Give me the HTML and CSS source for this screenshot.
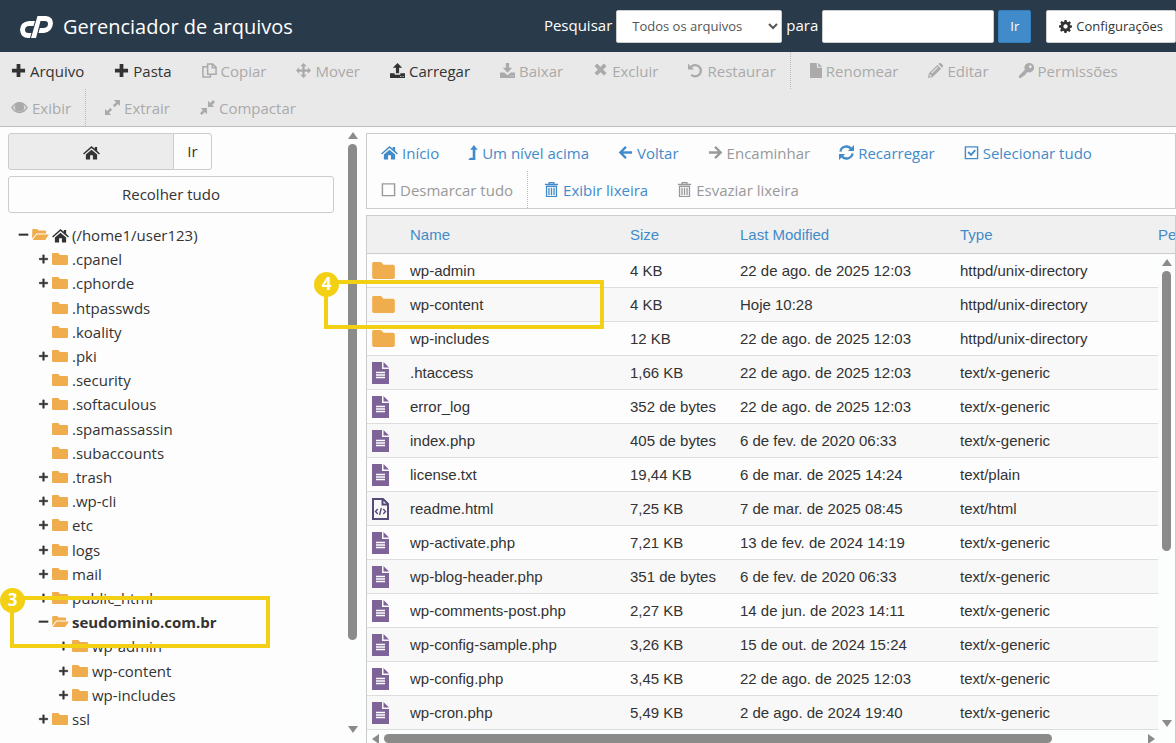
FILE: index.html
```html
<!DOCTYPE html>
<html lang="pt-BR">
<head>
  <meta charset="UTF-8">
  <title>Gerenciador de arquivos</title>
  <link rel="stylesheet" href="styles.css">
</head>

<body>
  <svg class="sprite" aria-hidden="true">
    <symbol id="plus" viewBox="0 0 16 16"><path d="M6 1h4v5h5v4h-5v5H6v-5H1V6h5z"/></symbol>
    <symbol id="minus" viewBox="0 0 16 16"><path d="M1 6h14v3H1z"/></symbol>
    <symbol id="plus-thin" viewBox="0 0 16 16"><path d="M7 2h2v5h5v2H9v5H7V9H2V7h5z" stroke="currentColor"/></symbol>
    <symbol id="copy" viewBox="0 0 16 16"><path d="M6 1h5.500L15 4.500V12H6zM11 1v4h4M6 4H1v11h8v-3" fill="none" stroke="currentColor" stroke-width="1.600"/></symbol>
    <symbol id="move" viewBox="0 0 16 16"><path d="M8 0l3.400 3.400H9.200v3.400h3.400V4.600L16 8l-3.400 3.400V9.200H9.200v3.400h2.200L8 16l-3.400-3.400h2.200V9.200H3.400v2.200L0 8l3.400-3.400v2.200h3.400V3.400H4.600z"/></symbol>
    <symbol id="upload" viewBox="0 0 16 16"><path d="M8 0l5 5h-3.300v6H6.300V5H3zM0 11h5v1.500h6V11h5v5H0zm11 2.800v1.200h1v-1.200zm2.500 0v1.200h1v-1.200z" fill-rule="evenodd"/></symbol>
    <symbol id="download" viewBox="0 0 16 16"><path d="M6.300 0h3.400v5H13l-5 5.500L3 5h3.300zM0 10h4.500L8 13l3.500-3H16v6H0zm11 3.300v1.200h1v-1.200zm2.500 0v1.200h1v-1.200z" fill-rule="evenodd"/></symbol>
    <symbol id="times" viewBox="0 0 16 16"><path d="M3 2l10 10M13 2L3 12" fill="none" stroke="currentColor" stroke-width="4"/></symbol>
    <symbol id="undo" viewBox="0 0 16 16"><path d="M3 4.500a6 6 0 1 1 .500 8" fill="none" stroke="currentColor" stroke-width="2.500"/><path d="M0 .500L6.500 7H0z"/></symbol>
    <symbol id="file" viewBox="0 0 13 16"><path d="M0 0h7.500v5H13v11H0zM9 0l4 4H9z"/></symbol>
    <symbol id="pencil" viewBox="0 0 16 16"><path d="M0 16l1-5 9-9 4 4-9 9zM11 1l1.200-1q.8-.5 1.500 0L16 2.300q.5.700 0 1.500l-1 1.200zM2 11.800l-.5 2.700 2.700-.5zM10 4l-6.500 6.500.8.800L10.800 4.800z" fill-rule="evenodd"/></symbol>
    <symbol id="key" viewBox="0 0 16 16"><path d="M11 0a5 5 0 1 1-1.800 9.600L7 11.500v1.500H5v1.500H3.500L2 16H0v-2.500l6.300-6.300A5 5 0 0 1 11 0zm1 2.500a1.500 1.500 0 1 0 .1 0z" fill-rule="evenodd"/></symbol>
    <symbol id="eye" viewBox="0 0 18 16"><path d="M0 8q3.500-6 9-6t9 6q-3.500 6-9 6T0 8zm2 0q2.600 4.400 7 4.400T16 8q-1-1.700-2.700-2.900a5 5 0 1 1-8.600 0Q3 6.300 2 8z" fill-rule="evenodd"/><path d="M9 4a4 4 0 1 1-.1 0zm0 1.300Q6.300 5.400 6.200 8h1Q7.300 6.400 9 6.300z" fill-rule="evenodd"/></symbol>
    <symbol id="expand" viewBox="0 0 16 16"><path d="M9.500 0H16v6.500l-2.300-2.300-3.400 3.400-1.900-1.900 3.400-3.400zM0 9.500l2.300 2.300 3.400-3.400 1.900 1.900-3.400 3.400L6.500 16H0z"/></symbol>
    <symbol id="compress" viewBox="0 0 16 16"><path d="M8.500.8l2.300 2.300L14 0l2 2-3.100 3.200 2.300 2.300H8.500zM.8 8.500h6.700v6.700l-2.300-2.300L2 16l-2-2 3.100-3.200z"/></symbol>
    <symbol id="gear" viewBox="0 0 16 16"><path d="M6.700 0h2.600l.5 2.200 1.200.5 2-1.200L14.700 3.300 13.400 5.200l.5 1.200 2.100.4v2.500l-2.200.5-.5 1.200 1.200 2-1.700 1.700-2-1.200-1.200.5-.4 2H6.700l-.5-2.200L5 13.300l-2 1.200L1.300 12.700l1.200-2L2 9.600 0 9.200V6.700l2.200-.5.500-1.200-1.200-2L3.300 1.300l1.900 1.200 1.200-.5zM8 5.300a2.700 2.700 0 1 0 .1 0z" fill-rule="evenodd"/></symbol>
    <symbol id="home" viewBox="0 0 18 16"><path d="M9 1L12.500 4V2H15v4.200L18 9l-1 1.200L9 3.300 1 10.200 0 9z"/><path d="M9 5l6 5v5.500h-4.500V11h-3v4.500H3V10z"/></symbol>
    <symbol id="level-up" viewBox="0 0 10 16"><path d="M6 0l4 5H7.500v11H0l1.800-2.500H4.700V5H2z"/></symbol>
    <symbol id="arrow-left" viewBox="0 0 16 16"><path d="M15 8H3M8.500 2l-6 6 6 6" fill="none" stroke="currentColor" stroke-width="2.500"/></symbol>
    <symbol id="arrow-right" viewBox="0 0 16 16"><path d="M1 8h12M7.500 2l6 6-6 6" fill="none" stroke="currentColor" stroke-width="2.500"/></symbol>
    <symbol id="refresh" viewBox="0 0 16 16"><path d="M1.500 7A6.300 6.300 0 0 1 13 4.500M14.500 9A6.300 6.300 0 0 1 3 11.500" fill="none" stroke="currentColor" stroke-width="2.400"/><path d="M16 0v6.500H9.500zM0 16V9.500h6.500z"/></symbol>
    <symbol id="check-square" viewBox="0 0 16 16"><path d="M1.500 2h13v12.500h-13z" fill="none" stroke="currentColor" stroke-width="1.500"/><path d="M4.500 7.500l3 3L12 5.500" fill="none" stroke="currentColor" stroke-width="2"/></symbol>
    <symbol id="square" viewBox="0 0 16 16"><path d="M1.500 2h13v12.500h-13z" fill="none" stroke="currentColor" stroke-width="1.500"/></symbol>
    <symbol id="trash" viewBox="0 0 16 16"><path d="M1 2.500h14M5.500 2V.700h5V2M2.700 4.500h10.600v11H2.700zM5.300 6v8M8 6v8M10.700 6v8" fill="none" stroke="currentColor" stroke-width="1.400"/></symbol>
    <symbol id="folder" viewBox="0 0 24 18"><path d="M1.500 0h8L12 3h10q2 0 2 2v11q0 2-2 2H2q-2 0-2-2V1.500Q0 0 1.500 0z"/></symbol>
    <symbol id="folder-open" viewBox="0 0 18 13"><path d="M0 1q0-1 1-1h4.500L7 1.500h7q1 0 1 1V5H4.500L0 10.500z"/><path d="M4.800 6H18l-3.500 5.500q-.3.500-1 .5H.5z"/></symbol>
    <symbol id="text-file" viewBox="0 0 17 22"><path d="M0 0h10v7h7v15H0zM11.500 0L17 5.500h-5.500z"/><path d="M4 10.500h9M4 13h9M4 15.500h9" stroke="#fff" stroke-width="1.300"/></symbol>
    <symbol id="code-file" viewBox="0 0 17 22"><path d="M1 1h10l5 5v15H1zM10.500 1v5.500H16" fill="none" stroke="currentColor" stroke-width="2"/><path d="M5.800 11L3.500 13.500 5.800 16M11.200 11l2.300 2.500-2.300 2.500M9.300 10l-1.700 7" fill="none" stroke="currentColor" stroke-width="1.400"/></symbol>
  </svg>

  <header class="top-bar">
    <h1 class="brand">
      <svg class="logo" viewBox="0 0 33 22" aria-hidden="true"><path d="M15 5H9Q0 6 0 14q1 8 8 8h2l1.400-5H8.500Q5 17 5 13.500 5.500 10 9 10h4.500zM17.500 0H26q7 .5 7 7.500-1 8.500-9 9.500h-5.500l1.400-5H24q4-.5 4-4Q28 5 25 5h-4.500L16 22h-5z" fill-rule="evenodd"/></svg>
      Gerenciador de arquivos
    </h1>
    <form class="search">
      <label for="scope">Pesquisar</label>
      <select id="scope"><option>Todos os arquivos</option></select>
      <label for="term">para</label>
      <input id="term" type="text">
      <button class="go" type="button">Ir</button>
      <button class="settings" type="button"><svg class="icon"><use href="#gear"/></svg>Configurações</button>
    </form>
  </header>

  <nav class="toolbar">
    <button><svg class="icon"><use href="#plus"/></svg>Arquivo</button>
    <button><svg class="icon"><use href="#plus"/></svg>Pasta</button>
    <button disabled><svg class="icon"><use href="#copy"/></svg>Copiar</button>
    <button disabled><svg class="icon"><use href="#move"/></svg>Mover</button>
    <button><svg class="icon"><use href="#upload"/></svg>Carregar</button>
    <button disabled><svg class="icon"><use href="#download"/></svg>Baixar</button>
    <button disabled><svg class="icon"><use href="#times"/></svg>Excluir</button>
    <button class="group-end" disabled><svg class="icon"><use href="#undo"/></svg>Restaurar</button>
    <button disabled><svg class="icon narrow"><use href="#file"/></svg>Renomear</button>
    <button disabled><svg class="icon"><use href="#pencil"/></svg>Editar</button>
    <button disabled><svg class="icon"><use href="#key"/></svg>Permissões</button>
    <button class="group-end" disabled><svg class="icon wide"><use href="#eye"/></svg>Exibir</button>
    <button disabled><svg class="icon"><use href="#expand"/></svg>Extrair</button>
    <button disabled><svg class="icon"><use href="#compress"/></svg>Compactar</button>
  </nav>

  <main class="workspace">
    <aside class="sidebar">
      <div class="path-group">
        <button class="path-home" aria-label="Início"><svg class="icon wide"><use href="#home"/></svg></button>
        <button class="path-go">Ir</button>
      </div>
      <button class="collapse">Recolher tudo</button>
      <ul class="tree">
        <li class="root"><svg class="toggle"><use href="#minus"/></svg><svg class="node open"><use href="#folder-open"/></svg><svg class="icon wide"><use href="#home"/></svg>(/home1/user123)</li>
        <li><svg class="toggle"><use href="#plus-thin"/></svg><svg class="node"><use href="#folder"/></svg>.cpanel</li>
        <li><svg class="toggle"><use href="#plus-thin"/></svg><svg class="node"><use href="#folder"/></svg>.cphorde</li>
        <li class="leaf"><svg class="node"><use href="#folder"/></svg>.htpasswds</li>
        <li class="leaf"><svg class="node"><use href="#folder"/></svg>.koality</li>
        <li><svg class="toggle"><use href="#plus-thin"/></svg><svg class="node"><use href="#folder"/></svg>.pki</li>
        <li class="leaf"><svg class="node"><use href="#folder"/></svg>.security</li>
        <li><svg class="toggle"><use href="#plus-thin"/></svg><svg class="node"><use href="#folder"/></svg>.softaculous</li>
        <li class="leaf"><svg class="node"><use href="#folder"/></svg>.spamassassin</li>
        <li class="leaf"><svg class="node"><use href="#folder"/></svg>.subaccounts</li>
        <li><svg class="toggle"><use href="#plus-thin"/></svg><svg class="node"><use href="#folder"/></svg>.trash</li>
        <li><svg class="toggle"><use href="#plus-thin"/></svg><svg class="node"><use href="#folder"/></svg>.wp-cli</li>
        <li><svg class="toggle"><use href="#plus-thin"/></svg><svg class="node"><use href="#folder"/></svg>etc</li>
        <li><svg class="toggle"><use href="#plus-thin"/></svg><svg class="node"><use href="#folder"/></svg>logs</li>
        <li><svg class="toggle"><use href="#plus-thin"/></svg><svg class="node"><use href="#folder"/></svg>mail</li>
        <li><svg class="toggle"><use href="#plus-thin"/></svg><svg class="node"><use href="#folder"/></svg>public_html</li>
        <li class="current"><svg class="toggle"><use href="#minus"/></svg><svg class="node open"><use href="#folder-open"/></svg>seudominio.com.br</li>
        <li class="deep"><svg class="toggle"><use href="#plus-thin"/></svg><svg class="node"><use href="#folder"/></svg>wp-admin</li>
        <li class="deep"><svg class="toggle"><use href="#plus-thin"/></svg><svg class="node"><use href="#folder"/></svg>wp-content</li>
        <li class="deep"><svg class="toggle"><use href="#plus-thin"/></svg><svg class="node"><use href="#folder"/></svg>wp-includes</li>
        <li><svg class="toggle"><use href="#plus-thin"/></svg><svg class="node"><use href="#folder"/></svg>ssl</li>
      </ul>
    </aside>
    <div class="scrollbar vertical tree-scroll">
      <span class="arrow up"></span><span class="track"><span class="thumb"></span></span><span class="arrow down"></span>
    </div>

    <section class="content">
      <nav class="actions">
        <a href="#"><svg class="icon wide"><use href="#home"/></svg>Início</a>
        <a href="#"><svg class="icon slim"><use href="#level-up"/></svg>Um nível acima</a>
        <a href="#"><svg class="icon"><use href="#arrow-left"/></svg>Voltar</a>
        <a href="#" class="off"><svg class="icon"><use href="#arrow-right"/></svg>Encaminhar</a>
        <a href="#"><svg class="icon"><use href="#refresh"/></svg>Recarregar</a>
        <a href="#"><svg class="icon"><use href="#check-square"/></svg>Selecionar tudo</a>
        <a href="#" class="off group-end"><svg class="icon"><use href="#square"/></svg>Desmarcar tudo</a>
        <a href="#"><svg class="icon"><use href="#trash"/></svg>Exibir lixeira</a>
        <a href="#" class="off"><svg class="icon"><use href="#trash"/></svg>Esvaziar lixeira</a>
      </nav>

      <div class="listing">
        <table class="files">
          <colgroup><col class="col-icon"><col class="col-name"><col class="col-size"><col class="col-date"><col><col class="col-perms"></colgroup>
          <thead>
            <tr><th></th><th>Name</th><th>Size</th><th>Last Modified</th><th>Type</th><th>Permissions</th></tr>
          </thead>
          <tbody>
            <tr><td><svg class="dir"><use href="#folder"/></svg></td><td>wp-admin</td><td>4 KB</td><td>22 de ago. de 2025 12:03</td><td>httpd/unix-directory</td><td></td></tr>
            <tr><td><svg class="dir"><use href="#folder"/></svg></td><td>wp-content</td><td>4 KB</td><td>Hoje 10:28</td><td>httpd/unix-directory</td><td></td></tr>
            <tr><td><svg class="dir"><use href="#folder"/></svg></td><td>wp-includes</td><td>12 KB</td><td>22 de ago. de 2025 12:03</td><td>httpd/unix-directory</td><td></td></tr>
            <tr><td><svg class="doc"><use href="#text-file"/></svg></td><td>.htaccess</td><td>1,66 KB</td><td>22 de ago. de 2025 12:03</td><td>text/x-generic</td><td></td></tr>
            <tr><td><svg class="doc"><use href="#text-file"/></svg></td><td>error_log</td><td>352 de bytes</td><td>22 de ago. de 2025 12:03</td><td>text/x-generic</td><td></td></tr>
            <tr><td><svg class="doc"><use href="#text-file"/></svg></td><td>index.php</td><td>405 de bytes</td><td>6 de fev. de 2020 06:33</td><td>text/x-generic</td><td></td></tr>
            <tr><td><svg class="doc"><use href="#text-file"/></svg></td><td>license.txt</td><td>19,44 KB</td><td>6 de mar. de 2025 14:24</td><td>text/plain</td><td></td></tr>
            <tr><td><svg class="doc code"><use href="#code-file"/></svg></td><td>readme.html</td><td>7,25 KB</td><td>7 de mar. de 2025 08:45</td><td>text/html</td><td></td></tr>
            <tr><td><svg class="doc"><use href="#text-file"/></svg></td><td>wp-activate.php</td><td>7,21 KB</td><td>13 de fev. de 2024 14:19</td><td>text/x-generic</td><td></td></tr>
            <tr><td><svg class="doc"><use href="#text-file"/></svg></td><td>wp-blog-header.php</td><td>351 de bytes</td><td>6 de fev. de 2020 06:33</td><td>text/x-generic</td><td></td></tr>
            <tr><td><svg class="doc"><use href="#text-file"/></svg></td><td>wp-comments-post.php</td><td>2,27 KB</td><td>14 de jun. de 2023 14:11</td><td>text/x-generic</td><td></td></tr>
            <tr><td><svg class="doc"><use href="#text-file"/></svg></td><td>wp-config-sample.php</td><td>3,26 KB</td><td>15 de out. de 2024 15:24</td><td>text/x-generic</td><td></td></tr>
            <tr><td><svg class="doc"><use href="#text-file"/></svg></td><td>wp-config.php</td><td>3,45 KB</td><td>22 de ago. de 2025 12:03</td><td>text/x-generic</td><td></td></tr>
            <tr><td><svg class="doc"><use href="#text-file"/></svg></td><td>wp-cron.php</td><td>5,49 KB</td><td>2 de ago. de 2024 19:40</td><td>text/x-generic</td><td></td></tr>
          </tbody>
        </table>
        <div class="scrollbar vertical list-scroll">
          <span class="arrow up"></span><span class="track"><span class="thumb"></span></span><span class="arrow down"></span>
        </div>
        <div class="scrollbar horizontal">
          <span class="arrow left"></span><span class="track"><span class="thumb"></span></span><span class="arrow right"></span>
        </div>
      </div>
    </section>
  </main>

  <div class="callout step-3"><span class="badge">3</span></div>
  <div class="callout step-4"><span class="badge">4</span></div>
</body>
</html>
```

FILE: styles.css
```css
*,
*::before,
*::after {
  box-sizing: border-box;
}
body {
  position: relative;
  display: flex;
  flex-direction: column;
  height: 100vh;
  margin: 0;
  overflow: hidden;
  font: 15px/20px 'Open Sans', sans-serif;
  color: #333;
  background: #fdfdfd;
}
button,
input,
select {
  font: inherit;
  color: inherit;
}
button {
  padding: 0;
  border: 0;
  background: none;
}
a {
  color: #428bca;
  text-decoration: none;
}
svg {
  flex: none;
  fill: currentColor;
}
.sprite {
  position: absolute;
  width: 0;
  height: 0;
}
.icon {
  width: 15px;
  height: 15px;
}
.icon.wide {
  width: 17px;
}
.icon.narrow {
  width: 12px;
}
.icon.slim {
  width: 10px;
}

/* header */
.top-bar {
  display: flex;
  align-items: center;
  justify-content: space-between;
  flex: none;
  height: 52px;
  padding-left: 20px;
  color: #fff;
  background: #293a4a;
}
.brand {
  display: flex;
  align-items: center;
  gap: 10px;
  margin: 0;
  padding-top: 2px;
  font-size: 20px;
  font-weight: 400;
  line-height: 28px;
}
.logo {
  width: 33px;
  height: 22px;
}
.search {
  display: flex;
  align-items: center;
  gap: 4px;
}
.search label {
  padding-bottom: 3px;
}
.search select,
.search input,
.search button {
  height: 33px;
  border: 1px solid #ccc;
  border-radius: 2px;
  background: #fff;
}
.search select {
  width: 166px;
  padding-left: 11px;
  font-size: 13px;
  color: #555;
}
.search input {
  width: 172px;
}
.search .go {
  width: 33px;
  border-color: #357ebd;
  font-size: 13px;
  background: #428bca;
}
.search .settings {
  display: flex;
  align-items: center;
  gap: 4px;
  margin-left: 11px;
  padding: 0 12px;
  font-size: 13px;
  color: #333;
}
.settings .icon {
  width: 13px;
  height: 13px;
}

/* toolbar */
.toolbar {
  display: flex;
  flex-wrap: wrap;
  flex: none;
  border-bottom: 1px solid #bfbfc3;
  background: #e9e9e9;
}
.toolbar button,
.actions a {
  display: flex;
  align-items: center;
  gap: 4px;
  height: 37px;
  padding: 0 19px 0 11px;
}
.toolbar button:disabled {
  color: #aaa;
}
.toolbar .group-end,
.actions .group-end {
  margin-right: 8px;
  padding-right: 14px;
  border-right: 1px dotted #bbb;
}

.workspace {
  display: flex;
  flex: 1;
  min-height: 0;
}

/* folder tree */
.sidebar {
  display: flex;
  flex-direction: column;
  flex: none;
  width: 345px;
  padding: 6px 11px 12px 8px;
}
.path-group {
  display: flex;
  width: 204px;
}
.path-group button,
.collapse {
  height: 37px;
  padding-bottom: 2px;
  border: 1px solid #ccc;
  border-radius: 3px;
}
.path-group .path-home {
  flex: 1;
  border-radius: 3px 0 0 3px;
  background: #ececec;
}
.path-group .path-go {
  width: 39px;
  margin-left: -1px;
  border-radius: 0 3px 3px 0;
}
.path-home .icon {
  vertical-align: middle;
}
.collapse {
  flex: none;
  margin-top: 6px;
}
.tree {
  display: grid;
  grid-auto-rows: 1fr;
  flex: 1;
  min-height: 0;
  margin: 10px 0 0;
  padding: 0;
  list-style: none;
}
.tree li {
  display: flex;
  align-items: center;
  gap: 3px;
  min-height: 0;
  padding-left: 30px;
}
.tree .root {
  padding-left: 10px;
}
.tree .leaf {
  padding-left: 44px;
}
.tree .deep {
  padding-left: 50px;
}
.tree .current {
  font-weight: 700;
}
.toggle {
  width: 11px;
  height: 12px;
}
.node {
  width: 16px;
  height: 12px;
  margin-right: 1px;
  color: #f0ad4e;
}
.node.open {
  width: 17px;
  margin-right: 0;
}

/* scrollbars */
.scrollbar {
  display: flex;
  gap: 5px;
  align-items: center;
  background: #fcfdfd;
}
.vertical {
  flex-direction: column;
  width: 15px;
  padding: 5px 0 10px;
}
.track {
  flex: 1;
}
.vertical .track {
  width: 9px;
}
.horizontal .track {
  height: 9px;
}
.thumb {
  display: block;
  height: 100%;
  border-radius: 5px;
  background: #8b8b89;
}
.tree-scroll .thumb {
  height: 86%;
}
.list-scroll .thumb {
  height: 63%;
}
.horizontal .thumb {
  width: 88%;
}
.arrow {
  border: 5px solid transparent;
}
.arrow.up {
  border-top: 0;
  border-bottom: 7px solid #8b8b89;
}
.arrow.down {
  border-top: 7px solid #8b8b89;
  border-bottom: 0;
}
.arrow.left {
  border-left: 0;
  border-right: 7px solid #8b8b89;
}
.arrow.right {
  border-right: 0;
  border-left: 7px solid #8b8b89;
}

/* file list */
.content {
  display: flex;
  flex-direction: column;
  flex: 1;
  min-width: 0;
  padding: 6px 0 0 6px;
}
.actions {
  display: flex;
  flex-wrap: wrap;
  flex: none;
  border: 1px solid #ccc;
}
.actions a {
  padding-left: 14px;
  padding-right: 15px;
}
.actions .off {
  color: #999;
}
.actions .group-end {
  margin-right: 2px;
}
.listing {
  position: relative;
  flex: 1;
  min-height: 0;
  margin-top: 6px;
  overflow: hidden;
  border: 1px solid #ccc;
  border-bottom: 0;
}
.files {
  width: 100%;
  table-layout: fixed;
  border-spacing: 0;
  font-family: 'Liberation Sans', Arial, sans-serif;
}
.col-icon {
  width: 43px;
}
.col-name {
  width: 220px;
}
.col-size {
  width: 110px;
}
.col-date {
  width: 220px;
}
.col-perms {
  width: 17px;
}
.files th,
.files td {
  height: 34px;
  padding: 0;
  overflow: hidden;
  white-space: nowrap;
  border-bottom: 1px solid #ddd;
}
.files th {
  height: 38px;
  font-weight: 400;
  text-align: left;
  color: #428bca;
  border-color: #ccc;
  background: #f0f0f0;
}
.files tr:nth-child(even) td {
  background: #f8f8f8;
}
.files svg {
  display: block;
  margin-left: 5px;
}
.dir {
  width: 23px;
  height: 17px;
  color: #f0ad4e;
}
.doc {
  width: 17px;
  height: 22px;
  color: #7e6399;
}
.doc.code {
  color: #574a78;
}
.list-scroll {
  position: absolute;
  top: 38px;
  right: 0;
  bottom: 13px;
  width: 17px;
  padding-bottom: 3px;
}
.horizontal {
  position: absolute;
  right: 0;
  bottom: 0;
  left: 0;
  height: 13px;
  padding: 4px 20px 0 5px;
}

/* numbered highlights over the page */
.callout {
  position: absolute;
  border: 4px solid #f3d014;
}
.badge {
  position: absolute;
  top: -12px;
  left: -14px;
  width: 25px;
  height: 25px;
  border-radius: 50%;
  font-size: 17px;
  font-weight: 700;
  line-height: 24px;
  text-align: center;
  color: #fff;
  background: #f3d014;
}
.step-3 {
  top: 596px;
  left: 10px;
  width: 260px;
  height: 52px;
}
.step-4 {
  top: 280px;
  left: 324px;
  width: 280px;
  height: 49px;
}
```
